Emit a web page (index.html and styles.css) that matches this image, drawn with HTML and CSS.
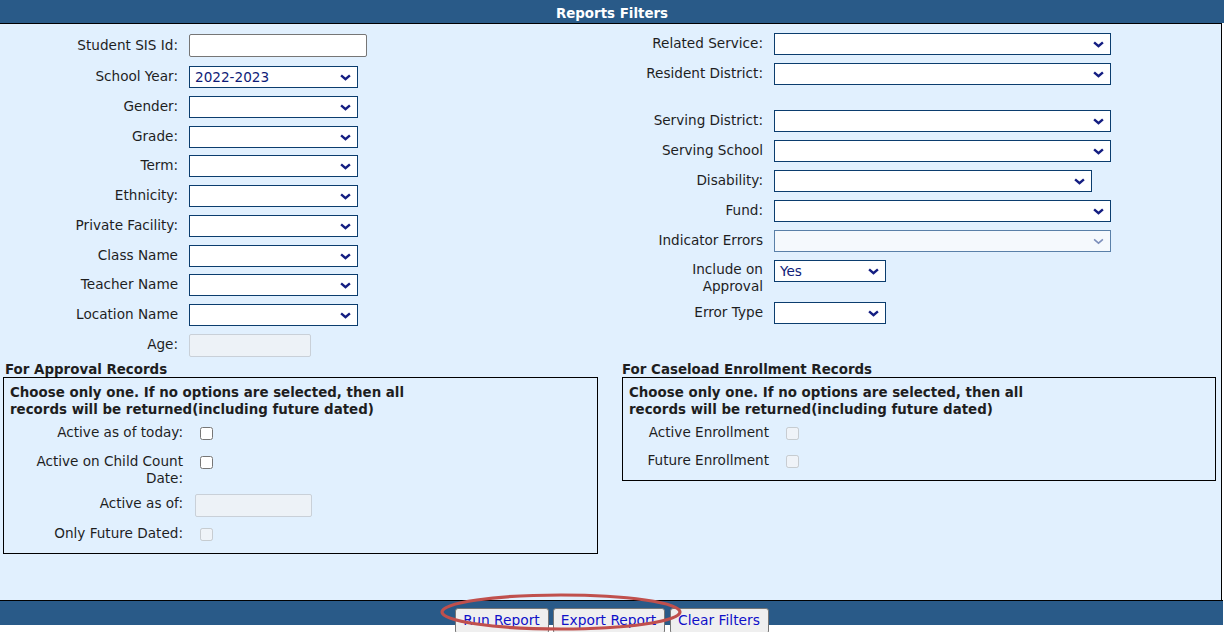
FILE: index.html
```html
<!DOCTYPE html>
<html>
<head>
<meta charset="utf-8">
<title>Reports Filters</title>
<link rel="stylesheet" href="styles.css">
</head>
<body>
<div class="header">Reports Filters</div>
<div class="panel">
  <div class="filters">
    <div class="col col-left">
      <div class="row row-first"><label class="lbl">Student SIS Id:</label><input class="txt txt-sis" type="text"></div>
      <div class="row"><label class="lbl">School Year:</label><span class="sel sel-l"><span class="val">2022-2023</span><svg class="chev" viewBox="0 0 10 6"><path d="M1 1 L5 4.5 L9 1"/></svg></span></div>
      <div class="row"><label class="lbl">Gender:</label><span class="sel sel-l"><span class="val"></span><svg class="chev" viewBox="0 0 10 6"><path d="M1 1 L5 4.5 L9 1"/></svg></span></div>
      <div class="row"><label class="lbl">Grade:</label><span class="sel sel-l"><span class="val"></span><svg class="chev" viewBox="0 0 10 6"><path d="M1 1 L5 4.5 L9 1"/></svg></span></div>
      <div class="row"><label class="lbl">Term:</label><span class="sel sel-l"><span class="val"></span><svg class="chev" viewBox="0 0 10 6"><path d="M1 1 L5 4.5 L9 1"/></svg></span></div>
      <div class="row"><label class="lbl">Ethnicity:</label><span class="sel sel-l"><span class="val"></span><svg class="chev" viewBox="0 0 10 6"><path d="M1 1 L5 4.5 L9 1"/></svg></span></div>
      <div class="row"><label class="lbl">Private Facility:</label><span class="sel sel-l"><span class="val"></span><svg class="chev" viewBox="0 0 10 6"><path d="M1 1 L5 4.5 L9 1"/></svg></span></div>
      <div class="row"><label class="lbl">Class Name</label><span class="sel sel-l"><span class="val"></span><svg class="chev" viewBox="0 0 10 6"><path d="M1 1 L5 4.5 L9 1"/></svg></span></div>
      <div class="row"><label class="lbl">Teacher Name</label><span class="sel sel-l"><span class="val"></span><svg class="chev" viewBox="0 0 10 6"><path d="M1 1 L5 4.5 L9 1"/></svg></span></div>
      <div class="row"><label class="lbl">Location Name</label><span class="sel sel-l"><span class="val"></span><svg class="chev" viewBox="0 0 10 6"><path d="M1 1 L5 4.5 L9 1"/></svg></span></div>
      <div class="row row-age"><label class="lbl">Age:</label><input class="txt txt-dis txt-age" type="text" disabled></div>
    </div>
    <div class="col col-right">
      <div class="row"><label class="lbl">Related Service:</label><span class="sel sel-w"><span class="val"></span><svg class="chev" viewBox="0 0 10 6"><path d="M1 1 L5 4.5 L9 1"/></svg></span></div>
      <div class="row"><label class="lbl">Resident District:</label><span class="sel sel-w"><span class="val"></span><svg class="chev" viewBox="0 0 10 6"><path d="M1 1 L5 4.5 L9 1"/></svg></span></div>
      <div class="spacer"></div>
      <div class="row"><label class="lbl">Serving District:</label><span class="sel sel-w"><span class="val"></span><svg class="chev" viewBox="0 0 10 6"><path d="M1 1 L5 4.5 L9 1"/></svg></span></div>
      <div class="row"><label class="lbl">Serving School</label><span class="sel sel-w"><span class="val"></span><svg class="chev" viewBox="0 0 10 6"><path d="M1 1 L5 4.5 L9 1"/></svg></span></div>
      <div class="row"><label class="lbl">Disability:</label><span class="sel sel-d"><span class="val"></span><svg class="chev" viewBox="0 0 10 6"><path d="M1 1 L5 4.5 L9 1"/></svg></span></div>
      <div class="row"><label class="lbl">Fund:</label><span class="sel sel-w"><span class="val"></span><svg class="chev" viewBox="0 0 10 6"><path d="M1 1 L5 4.5 L9 1"/></svg></span></div>
      <div class="row"><label class="lbl">Indicator Errors</label><span class="sel sel-w sel-dis"><span class="val"></span><svg class="chev" viewBox="0 0 10 6"><path d="M1 1 L5 4.5 L9 1"/></svg></span></div>
      <div class="row row-two"><label class="lbl">Include on<br>Approval</label><span class="sel sel-s"><span class="val">Yes</span><svg class="chev" viewBox="0 0 10 6"><path d="M1 1 L5 4.5 L9 1"/></svg></span></div>
      <div class="row"><label class="lbl">Error Type</label><span class="sel sel-s"><span class="val"></span><svg class="chev" viewBox="0 0 10 6"><path d="M1 1 L5 4.5 L9 1"/></svg></span></div>
    </div>
  </div>
  <div class="sections">
    <div class="section section-left">
      <div class="sec-title">For Approval Records</div>
      <div class="box box-left">
        <div class="note">Choose only one. If no options are selected, then all<br>records will be returned(including future dated)</div>
        <div class="crows crows-left">
          <div class="crow"><span class="clbl">Active as of today:</span><input class="chk" type="checkbox"></div>
          <div class="crow"><span class="clbl">Active on Child Count<br>Date:</span><input class="chk" type="checkbox"></div>
          <div class="crow"><span class="clbl">Active as of:</span><input class="txt txt-dis txt-asof" type="text" disabled></div>
          <div class="crow"><span class="clbl">Only Future Dated:</span><input class="chk" type="checkbox" disabled></div>
        </div>
      </div>
    </div>
    <div class="section section-right">
      <div class="sec-title">For Caseload Enrollment Records</div>
      <div class="box box-right">
        <div class="note">Choose only one. If no options are selected, then all<br>records will be returned(including future dated)</div>
        <div class="crows crows-right">
          <div class="crow"><span class="clbl">Active Enrollment</span><input class="chk" type="checkbox" disabled></div>
          <div class="crow"><span class="clbl">Future Enrollment</span><input class="chk" type="checkbox" disabled></div>
        </div>
      </div>
    </div>
  </div>
</div>
<div class="footer">
  <button class="btn btn-run" type="button">Run Report</button>
  <button class="btn btn-export" type="button">Export Report</button>
  <button class="btn btn-clear" type="button">Clear Filters</button>
  <svg class="annot" viewBox="0 0 244 40" width="244" height="40"><ellipse cx="122" cy="19" rx="119" ry="17"/></svg>
</div>
</body>
</html>
```

FILE: styles.css
```css
* { box-sizing: border-box; }
html, body { margin: 0; padding: 0; background: #fff; }
body {
  font-family: "DejaVu Sans", Verdana, sans-serif;
  font-size: 13.6px;
  color: #1e1e1e;
  width: 1224px;
  height: 632px;
  overflow: hidden;
}
.header {
  height: 23px;
  background: #295a88;
  color: #fff;
  font-weight: bold;
  font-size: 13.4px;
  text-align: center;
  line-height: 27px;
  padding-left: 0;
}
.panel {
  height: 577px;
  width: 1222px;
  background: #e1f0fe;
  border-top: 1px solid #000;
  border-right: 1px solid #000;
}
.filters {
  display: grid;
  grid-template-columns: 612px 1fr;
}
.col-left { padding-top: 10px; }
.col-right { padding-top: 9px; }
.row {
  display: flex;
  align-items: center;
  height: 22px;
  margin-bottom: 7.75px;
}
.col-right .row { margin-bottom: 8px; }
.row-first { height: 23px; margin-bottom: 9px; }
.row-age { height: 23px; margin-top: 1px; margin-bottom: 0; }
.row-two { height: 34px; align-items: flex-start; margin-bottom: 7px; }
.row-two .lbl { line-height: 17px; margin-top: 1px; }
.spacer { height: 17px; }
.lbl {
  text-align: right;
  flex: none;
  line-height: 17px;
  margin-top: -1px;
}
.col-left .lbl { width: 178px; margin-right: 11px; }
.col-right .lbl { width: 151px; margin-right: 11px; }

.txt {
  font: inherit;
  height: 23px;
  border: 1px solid #767676;
  border-radius: 2px;
  background: #fff;
  padding: 0 4px;
  margin: 0;
}
.txt-sis { width: 178px; }
.txt-dis { background: #edf2f7; border-color: #c9d0d8; }
.txt-age { width: 122px; }
.txt-asof { width: 117px; }

.sel {
  position: relative;
  display: inline-flex;
  align-items: center;
  height: 22px;
  background: #fff;
  border: 1px solid #0b3d6e;
  color: #0f1c78;
  padding-left: 5px;
}
.sel-l { width: 169px; }
.sel-w { width: 337px; }
.sel-d { width: 318px; }
.sel-s { width: 112px; }
.sel-dis { background: #f5f9fd; border-color: #5a80a8; }
.val { line-height: 17px; }
.chev {
  position: absolute;
  right: 6px;
  top: 7px;
  width: 11px;
  height: 7px;
  fill: none;
  stroke: #141e82;
  stroke-width: 2.2;
  stroke-linecap: butt;
  stroke-linejoin: miter;
}
.sel-dis .chev { stroke: #7d8fbb; stroke-width: 1.4; }

.sections {
  display: grid;
  grid-template-columns: 595px 594px;
  column-gap: 24px;
  padding-left: 3px;
  margin-top: 3px;
}
.sec-title {
  font-weight: bold;
  font-size: 13.4px;
  line-height: 17px;
  height: 17px;
  padding-top: 1px;
}
.section-left .sec-title { padding-left: 2px; }
.box {
  border: 1px solid #000;
  padding: 6px 0 0 6px;
}
.box-left { height: 177px; }
.box-right { height: 104px; }
.note {
  font-weight: bold;
  font-size: 13.4px;
  line-height: 17px;
}
.crows { margin-top: 6px; display: grid; }
.crows-left { grid-template-rows: 29px 42px 30px auto; }
.crows-right { grid-template-rows: 28px auto; }
.crow { display: flex; align-items: flex-start; }
.clbl { text-align: right; line-height: 17px; flex: none; margin-right: 12px; }
.crows-left .clbl { width: 173px; }
.crows-right .clbl { width: 140px; }
.chk {
  width: 13px;
  height: 13px;
  margin: 3px 0 0 5px;
}
.crow .txt-asof { margin-top: -1px; }

.footer {
  position: relative;
  height: 25px;
  background: #295a88;
  border-top: 1px solid #000;
  width: 1223px;
  padding-top: 7px;
  text-align: center;
  font-size: 0;
  white-space: nowrap;
}
.btn {
  font-family: "DejaVu Sans", Verdana, sans-serif;
  font-size: 13.8px;
  color: #1010c8;
  background: #efefef;
  border: 1px solid #767676;
  border-radius: 3px;
  height: 26px;
  padding: 0 4px 2px;
  margin: 0;
  vertical-align: top;
}
.btn-run { width: 94px; }
.btn-export { width: 112px; margin-left: 4px; }
.btn-clear { width: 99px; margin-left: 5px; }
.annot {
  position: absolute;
  left: 439px;
  top: -8px;
  overflow: visible;
}
.annot ellipse {
  fill: none;
  stroke: #c0504d;
  stroke-width: 3.2;
}
```
